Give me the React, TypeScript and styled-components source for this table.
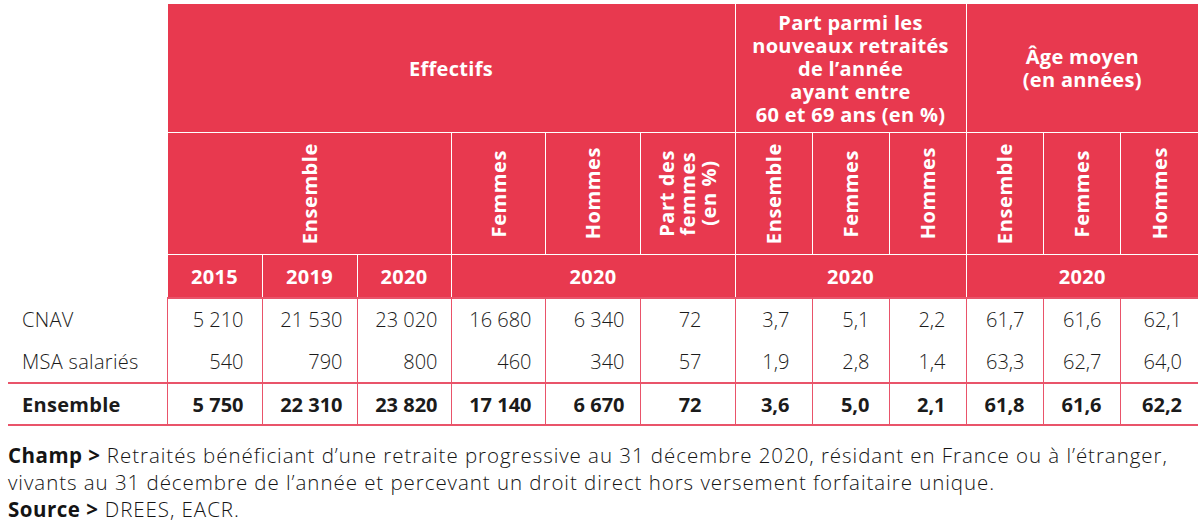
import React from 'react';
import styled, { createGlobalStyle } from 'styled-components';

const RED = '#e8394f';
const LINE = '#e9546a';

const GlobalStyle = createGlobalStyle`
  html, body {
    margin: 0;
    padding: 0;
    background: #ffffff;
  }
  body {
    font-family: "Open Sans", Lato, sans-serif;
    color: #1b1b1b;
  }
`;

const Page = styled.div`
  padding: 4px 0 0 8px;
  width: 1190px;
`;

const Table = styled.table`
  border-collapse: collapse;
  table-layout: fixed;
  width: 1190px;
  font-size: 20px;
`;

const Corner = styled.th`
  background: #ffffff;
  border: none;
`;

const HeadCell = styled.th<{ $h?: number }>`
  background: ${RED};
  color: #ffffff;
  font-weight: 700;
  font-size: 20px;
  letter-spacing: 0.3px;
  line-height: 23px;
  text-align: center;
  vertical-align: middle;
  border: 1.5px solid #ffffff;
  height: ${p => p.$h ?? 40}px;
  padding: 0 2px;
`;

const FirstHeadRow = styled.tr`
  & > th:not(:first-child) {
    border-top: none;
  }
  & > th:last-child {
    border-right: none;
  }
`;

const HeadRow = styled.tr`
  & > th:last-child {
    border-right: none;
  }
`;

const YearRow = styled.tr`
  & > th {
    border-bottom: 2px solid ${LINE};
  }
  & > th:last-child {
    border-right: none;
  }
`;

const Rotated = styled.div`
  writing-mode: vertical-rl;
  transform: rotate(180deg);
  margin: 0 auto;
  line-height: 21px;
  letter-spacing: 0.6px;
  text-align: center;
`;

const Row = styled.tr<{ $bold?: boolean; $h: number; $rule?: boolean }>`
  height: ${p => p.$h}px;
  font-weight: ${p => (p.$bold ? 700 : 300)};
  border-bottom: ${p => (p.$rule ? `2px solid ${LINE}` : 'none')};
`;

const Label = styled.td`
  text-align: left;
  padding: 0 0 0 14px;
  border-right: 1px solid ${LINE};
  white-space: nowrap;
  letter-spacing: 0.3px;
`;

const Num = styled.td<{ $pad: number }>`
  text-align: right;
  padding: 0 ${p => p.$pad}px 0 0;
  border-right: 1px solid ${LINE};
  white-space: nowrap;
  &:last-child {
    border-right: none;
  }
`;

const Notes = styled.div`
  margin-top: 16px;
  font-size: 20.5px;
  font-weight: 300;
  letter-spacing: 0.95px;
  line-height: 27px;
  color: #141414;
  white-space: nowrap;
`;

const Tag = styled.b`
  font-weight: 700;
  letter-spacing: 0.5px;
`;

const widths = [159, 95, 95, 94, 94, 95, 95, 77, 77, 77, 77, 77, 78];
const pads = [18, 14, 13, 13, 15, 33, 22, 19, 20, 18, 18, 16];

const s = '\u00a0';
const rows: { label: string; values: string[]; bold?: boolean; h: number; rule?: boolean }[] = [
  {
    label: 'CNAV',
    values: [`5${s}210`, `21${s}530`, `23${s}020`, `16${s}680`, `6${s}340`, '72', '3,7', '5,1', '2,2', '61,7', '61,6', '62,1'],
    h: 42,
  },
  {
    label: 'MSA salariés',
    values: ['540', '790', '800', '460', '340', '57', '1,9', '2,8', '1,4', '63,3', '62,7', '64,0'],
    h: 43,
    rule: true,
  },
  {
    label: 'Ensemble',
    values: [`5${s}750`, `22${s}310`, `23${s}820`, `17${s}140`, `6${s}670`, '72', '3,6', '5,0', '2,1', '61,8', '61,6', '62,2'],
    bold: true,
    h: 42,
    rule: true,
  },
];

const App: React.FC = () => {
  return (
    <Page>
      <GlobalStyle />
      <Table>
        <colgroup>
          {widths.map((w, i) => (
            <col key={i} style={{ width: w }} />
          ))}
        </colgroup>
        <thead>
          <FirstHeadRow>
            <Corner rowSpan={3} />
            <HeadCell colSpan={6} $h={128}>Effectifs</HeadCell>
            <HeadCell colSpan={3} $h={128}>
              Part parmi les
              <br />
              nouveaux retraités
              <br />
              de l’année
              <br />
              ayant entre
              <br />
              60 et 69 ans (en %)
            </HeadCell>
            <HeadCell colSpan={3} $h={128}>
              Âge moyen
              <br />
              (en années)
            </HeadCell>
          </FirstHeadRow>
          <HeadRow>
            <HeadCell colSpan={3} $h={121}>
              <Rotated>Ensemble</Rotated>
            </HeadCell>
            <HeadCell $h={121}>
              <Rotated>Femmes</Rotated>
            </HeadCell>
            <HeadCell $h={121}>
              <Rotated>Hommes</Rotated>
            </HeadCell>
            <HeadCell $h={121}>
              <Rotated>
                Part des
                <br />
                femmes
                <br />
                (en %)
              </Rotated>
            </HeadCell>
            {['Ensemble', 'Femmes', 'Hommes', 'Ensemble', 'Femmes', 'Hommes'].map((t, i) => (
              <HeadCell key={i} $h={121}>
                <Rotated>{t}</Rotated>
              </HeadCell>
            ))}
          </HeadRow>
          <YearRow>
            <HeadCell $h={42}>2015</HeadCell>
            <HeadCell $h={42}>2019</HeadCell>
            <HeadCell $h={42}>2020</HeadCell>
            <HeadCell colSpan={3} $h={42}>2020</HeadCell>
            <HeadCell colSpan={3} $h={42}>2020</HeadCell>
            <HeadCell colSpan={3} $h={42}>2020</HeadCell>
          </YearRow>
        </thead>
        <tbody>
          {rows.map(r => (
            <Row key={r.label} $bold={r.bold} $h={r.h} $rule={r.rule}>
              <Label>{r.label}</Label>
              {r.values.map((v, i) => (
                <Num key={i} $pad={pads[i]}>
                  {v}
                </Num>
              ))}
            </Row>
          ))}
        </tbody>
      </Table>
      <Notes>
        <Tag>Champ &gt;</Tag> Retraités bénéficiant d’une retraite progressive au 31 décembre 2020, résidant en France ou à l’étranger,
        <br />
        vivants au 31 décembre de l’année et percevant un droit direct hors versement forfaitaire unique.
        <br />
        <Tag>Source &gt;</Tag> DREES, EACR.
      </Notes>
    </Page>
  );
};

export default App;
